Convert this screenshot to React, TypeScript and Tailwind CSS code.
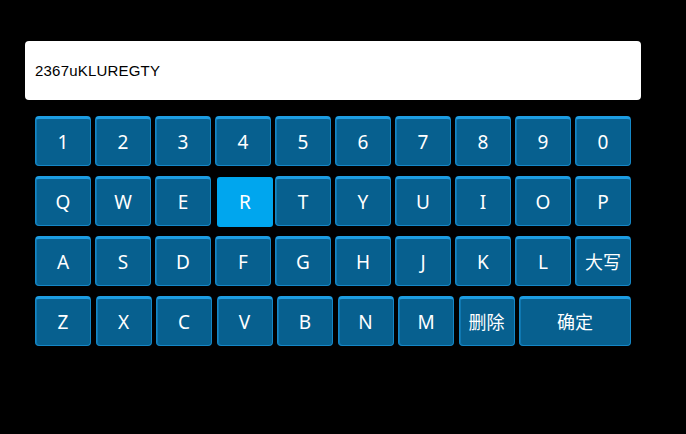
import React from "react";

const rows: string[][] = [
  ["1", "2", "3", "4", "5", "6", "7", "8", "9", "0"],
  ["Q", "W", "E", "R", "T", "Y", "U", "I", "O", "P"],
  ["A", "S", "D", "F", "G", "H", "J", "K", "L", "大写"],
];

const last = ["Z", "X", "C", "V", "B", "N", "M", "删除"];

function Key({ label, active, wide }: { label: string; active?: boolean; wide?: boolean }) {
  if (active) {
    return (
      <div className="w-[56px] h-[50px] mt-[1px] ml-[2px] -mr-[2px] rounded-[3px] bg-[#00a6ee] flex items-center justify-center text-[19px] text-white">
        {label}
      </div>
    );
  }
  const cjk = label.length > 1;
  return (
    <div
      className={`${wide ? "w-[112px]" : "w-[56px]"} h-[50px] rounded-[4px] bg-[#07608f] border border-[#1587c6] border-t-[3px] border-t-[#1d9de2] shadow-[inset_1px_0_0_#0f78b2] flex items-center justify-center text-white ${
        cjk ? "text-[18px]" : "text-[19px]"
      }`}
    >
      {label}
    </div>
  );
}

export default function App() {
  return (
    <div
      className="w-[686px] h-[434px] bg-black pt-[41px] pl-[25px]"
      style={{ fontFamily: '"Noto Sans", "Noto Sans CJK SC", sans-serif' }}
    >
      {/* input */}
      <div className="w-[616px] h-[59px] bg-white rounded-[4px] flex items-center pl-[10px] pt-[1px]">
        <span className="text-[15px] text-black tracking-[0.2px]" style={{ fontFamily: '"Liberation Sans", Arial, sans-serif' }}>
          2367uKLUREGTY
        </span>
      </div>

      {/* keyboard */}
      <div className="ml-[10px] mt-[16px] w-[596px] flex flex-col gap-[10px]">
        {rows.map((row, i) => (
          <div key={i} className="flex gap-[4px] h-[50px]">
            {row.map((k) => (
              <Key key={k} label={k} active={k === "R"} />
            ))}
          </div>
        ))}
        <div className="flex justify-between h-[50px]">
          {last.map((k) => (
            <Key key={k} label={k} />
          ))}
          <Key label="确定" wide />
        </div>
      </div>
    </div>
  );
}
